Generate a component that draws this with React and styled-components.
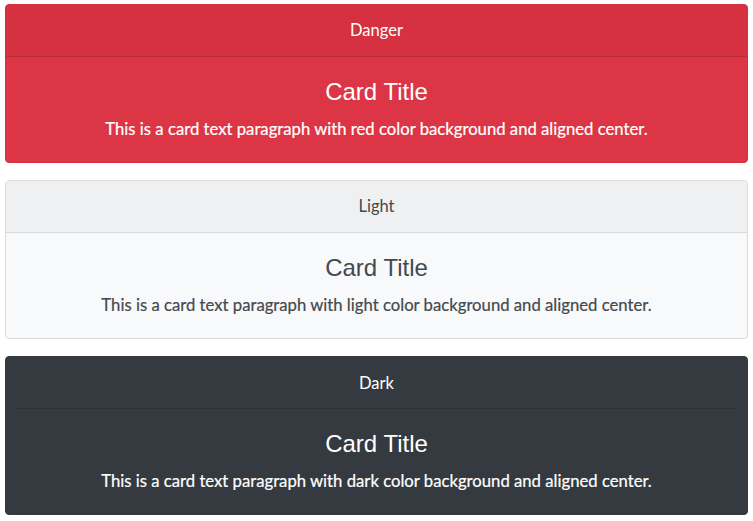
import React from 'react';
import styled, { createGlobalStyle, css } from 'styled-components';

const GlobalStyle = createGlobalStyle`
  html, body {
    margin: 0;
    padding: 0;
    background: #ffffff;
  }
`;

const palette = {
  danger: {
    header: '#d53140',
    body: '#dc3545',
    text: '#ffffff',
    border: '#d2303f',
    line: 'rgba(0, 0, 0, 0.12)'
  },
  light: {
    header: '#eff0f1',
    body: '#f8f9fa',
    text: '#45494e',
    border: '#dadcde',
    line: '#d9dadb'
  },
  dark: {
    header: '#343a40',
    body: '#343a40',
    text: '#ffffff',
    border: '#343a40',
    line: 'rgba(0, 0, 0, 0.14)'
  }
};

const cards = [
  { variant: 'danger', label: 'Danger', color: 'red' },
  { variant: 'light', label: 'Light', color: 'light' },
  { variant: 'dark', label: 'Dark', color: 'dark' }
];

function App() {
  return (
    <>
      <GlobalStyle />
      <Page>
        {cards.map((card) => (
          <Card key={card.variant} $variant={card.variant}>
            <Header $variant={card.variant} $inset={card.variant === 'dark'}>
              {card.label}
            </Header>
            <Body>
              <Title>Card Title</Title>
              <Text>
                This is a card text paragraph with {card.color} color background and aligned center.
              </Text>
            </Body>
          </Card>
        ))}
      </Page>
    </>
  );
}

export default App;

const Page = styled.div`
  display: flex;
  flex-direction: column;
  row-gap: 17px;
  padding: 4px 5px;
`;

const Card = styled.div`
  display: flex;
  flex-direction: column;
  height: 159px;
  box-sizing: border-box;
  border: 1px solid ${({ $variant }) => palette[$variant].border};
  border-radius: 4px;
  overflow: hidden;
  background-color: ${({ $variant }) => palette[$variant].body};
  color: ${({ $variant }) => palette[$variant].text};
  text-align: center;
`;

const Header = styled.div`
  position: relative;
  display: flex;
  align-items: center;
  justify-content: center;
  height: 52px;
  padding-bottom: 1px;
  box-sizing: border-box;
  flex-shrink: 0;
  background-color: ${({ $variant }) => palette[$variant].header};
  font-family: Lato, 'Liberation Sans', sans-serif;
  font-size: 16.5px;

  ${({ $inset, $variant }) =>
    $inset
      ? css`
          &::after {
            content: '';
            position: absolute;
            left: 11px;
            right: 11px;
            bottom: 0;
            height: 1px;
            background: ${palette[$variant].line};
          }
        `
      : css`
          border-bottom: 1px solid ${palette[$variant].line};
        `}
`;

const Body = styled.div`
  display: flex;
  flex-direction: column;
  align-items: center;
  row-gap: 13px;
  padding-top: 20px;
`;

const Title = styled.h5`
  margin: 0;
  font-family: 'Liberation Sans', Arial, sans-serif;
  font-size: 24px;
  font-weight: 400;
  line-height: 29px;
`;

const Text = styled.p`
  margin: 0;
  font-family: Lato, 'Liberation Sans', sans-serif;
  font-size: 16.7px;
  line-height: 20px;
  -webkit-text-stroke: 0.2px currentColor;
`;
